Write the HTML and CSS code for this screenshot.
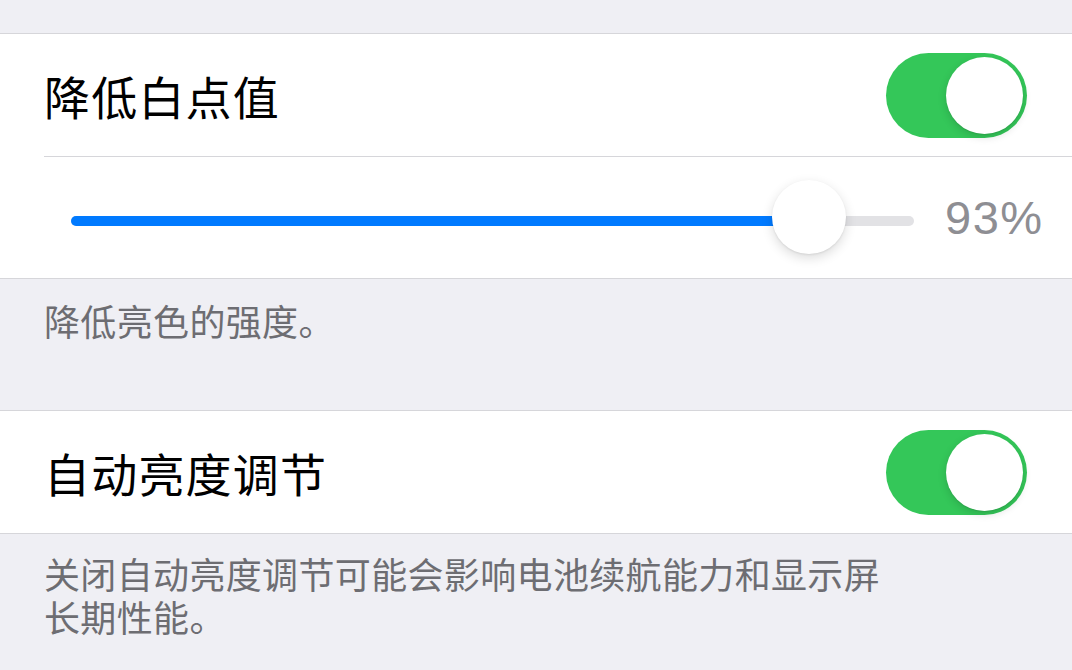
FILE: index.html
```html
<!DOCTYPE html>
<html lang="zh-CN">
<head>
<meta charset="utf-8">
<title>显示调节</title>
<link rel="stylesheet" href="styles.css">
</head>
<body>
<div class="screen">
  <div class="top-gap"></div>
  <section class="group">
    <div class="row">
      <span class="label">降低白点值</span>
      <span class="toggle on"><span class="knob"></span></span>
    </div>
    <div class="separator"></div>
    <div class="slider-row">
      <div class="track">
        <div class="fill" style="width: 87.5%"></div>
        <div class="thumb" style="left: 87.5%"></div>
      </div>
      <span class="value">93%</span>
    </div>
  </section>
  <div class="footer footer-first">
    <p class="note">降低亮色的强度。</p>
  </div>
  <section class="group">
    <div class="row">
      <span class="label">自动亮度调节</span>
      <span class="toggle on"><span class="knob"></span></span>
    </div>
  </section>
  <div class="footer footer-last">
    <p class="note">关闭自动亮度调节可能会影响电池续航能力和显示屏长期性能。</p>
  </div>
</div>
</body>
</html>
```
FILE: styles.css
```css
html, body {
  margin: 0;
  padding: 0;
}
body {
  background: #efeff4;
  font-family: "Noto Sans CJK SC", "Noto Sans", sans-serif;
  width: 1072px;
  height: 670px;
  overflow: hidden;
}
.screen {
  display: flex;
  flex-direction: column;
}
.top-gap {
  height: 33px;
}
.group {
  background: #fff;
  border-top: 1px solid #d6d6da;
  border-bottom: 1px solid #d6d6da;
}
.row {
  height: 122px;
  display: flex;
  align-items: center;
  justify-content: space-between;
  padding: 0 45px 0 44px;
}
.label {
  font-size: 46px;
  color: #000;
  letter-spacing: 1.2px;
  line-height: 1;
}
.toggle {
  width: 141px;
  height: 85px;
  border-radius: 43px;
  background: #34c759;
  position: relative;
  display: block;
}
.knob {
  position: absolute;
  top: 4px;
  right: 4px;
  width: 77px;
  height: 77px;
  border-radius: 50%;
  background: #fff;
  box-shadow: 0 3px 8px rgba(0, 0, 0, 0.15), 0 1px 1px rgba(0, 0, 0, 0.08);
}
.separator {
  height: 1px;
  background: #d6d6da;
  margin-left: 44px;
}
.slider-row {
  height: 121px;
  display: flex;
  align-items: center;
  padding: 0 30px 0 71px;
  gap: 31px;
}
.track {
  flex: 1;
  height: 10px;
  border-radius: 5px;
  background: #e2e2e5;
  position: relative;
  margin-top: 6px;
}
.fill {
  height: 100%;
  border-radius: 5px 0 0 5px;
  background: #007aff;
}
.thumb {
  position: absolute;
  top: 50%;
  width: 74px;
  height: 74px;
  margin-left: -37px;
  margin-top: -41px;
  border-radius: 50%;
  background: #fff;
  box-shadow: 0 4px 12px rgba(0, 0, 0, 0.14), 0 1px 2px rgba(0, 0, 0, 0.08);
}
.value {
  width: 97px;
  text-align: right;
  font-family: "Liberation Sans", "Noto Sans", sans-serif;
  font-size: 47px;
  letter-spacing: 1.5px;
  color: #8e8e93;
  line-height: 1;
  white-space: nowrap;
}
.footer {
  padding: 0 44px;
}
.footer-first {
  height: 131px;
  padding-top: 20px;
  box-sizing: border-box;
}
.footer-last {
  padding-top: 18px;
}
.note {
  margin: 0;
  font-size: 36px;
  letter-spacing: 0.35px;
  line-height: 43px;
  color: #6d6d72;
  max-width: 850px;
}
```
